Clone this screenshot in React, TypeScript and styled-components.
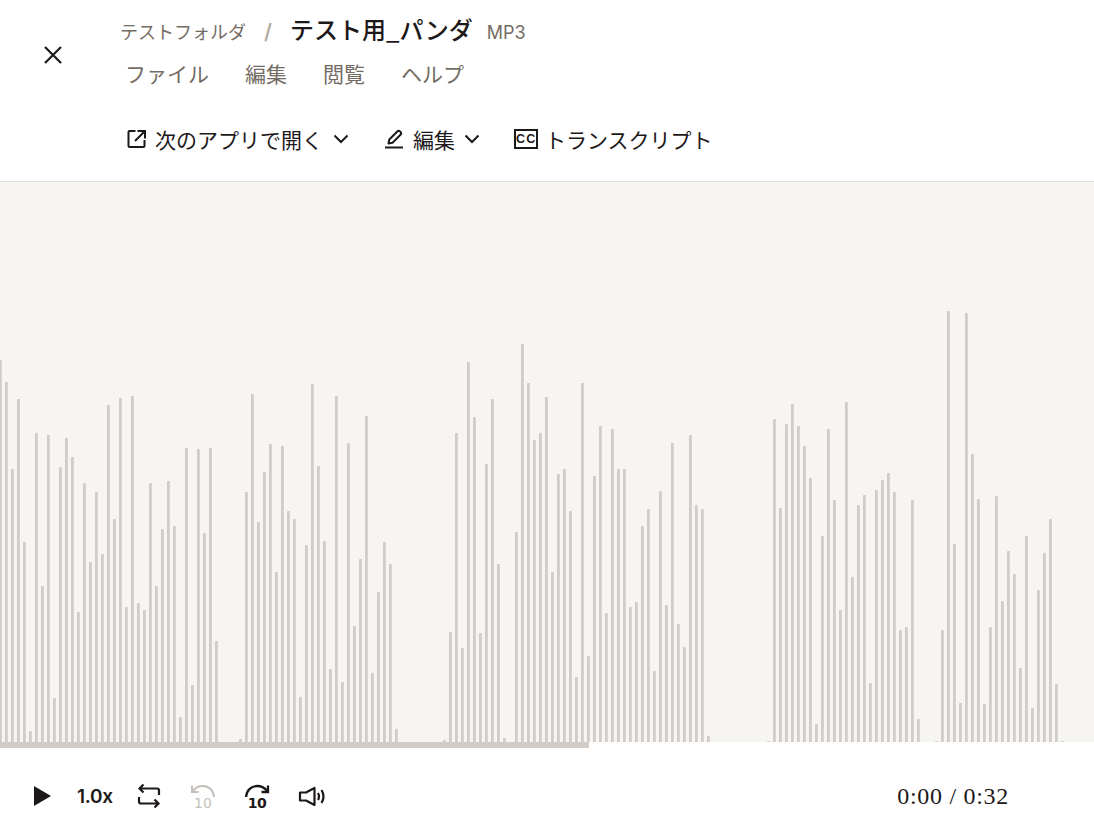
import React from "react";
import styled, { createGlobalStyle } from "styled-components";

const Global = createGlobalStyle`
  html, body { margin: 0; padding: 0; background: #fff; }
  body { font-family: "Inter", "Noto Sans CJK JP", sans-serif; }
`;

const JP = `"Noto Sans CJK JP", "Noto Sans", sans-serif`;

const Page = styled.div`
  width: 1094px;
  height: 834px;
  display: flex;
  flex-direction: column;
  overflow: hidden;
  color: #1e1919;
`;

const Header = styled.header`
  height: 181px;
  flex: none;
  display: flex;
  border-bottom: 1px solid #dfdcd8;
`;

const CloseButton = styled.button`
  width: 120px;
  height: 110px;
  flex: none;
  padding: 0 14px 0 0;
  border: 0;
  background: none;
  color: #1e1919;
  display: flex;
  align-items: center;
  justify-content: center;
`;

const HeaderMain = styled.div`
  display: flex;
  flex-direction: column;
`;

const Crumbs = styled.div`
  height: 24px;
  margin-top: 17px;
  display: flex;
  align-items: baseline;
  line-height: 24px;
  font-family: ${JP};
`;

const Folder = styled.span`
  font-size: 18px;
  color: #736c64;
`;

const Slash = styled.span`
  margin: 0 18px;
  font-size: 21px;
  font-weight: 600;
  color: #b4ada6;
  font-family: "Inter", sans-serif;
`;

const Title = styled.span`
  font-size: 24px;
  font-weight: 500;
  color: #1e1919;
`;

const Ext = styled.span`
  margin-left: 14px;
  font-size: 18px;
  color: #736c64;
  font-family: "Inter", sans-serif;
`;

const Menu = styled.nav`
  margin: 17px 0 0 5px;
  display: flex;
  gap: 36px;
  font-family: ${JP};
  font-size: 21px;
  line-height: 30px;
  color: #736c64;
`;

const Toolbar = styled.div`
  margin: 36px 0 0 6px;
  height: 30px;
  display: flex;
  align-items: center;
  font-family: ${JP};
  font-size: 21px;
  color: #1e1919;
`;

const Tool = styled.div<{ $gap: number; $textGap: number }>`
  display: flex;
  align-items: center;
  gap: ${(p) => p.$textGap}px;
  margin-right: ${(p) => p.$gap}px;
`;

const ChevronSvg = styled.svg<{ $offset: number }>`
  display: block;
  margin-left: ${(p) => p.$offset}px;
`;

const Wave = styled.div`
  height: 560px;
  flex: none;
  background: #f6f5f1;
`;

const WaveSvg = styled.svg`
  display: block;
`;

const Track = styled.div`
  height: 6px;
  flex: none;
  background: #fff;
`;

const TrackFill = styled.div`
  height: 100%;
  background: #d1ccc7;
`;

const Controls = styled.div`
  flex: 1;
  display: flex;
  align-items: center;
  padding: 10px 85px 0 30px;
`;

const PlayIcon = styled.svg`
  margin-right: 23px;
  display: block;
`;

const Speed = styled.span`
  width: 36px;
  margin-right: 23px;
  font-family: "Inter", sans-serif;
  font-size: 19px;
  font-weight: 600;
  letter-spacing: -0.3px;
  white-space: nowrap;
  color: #1e1919;
`;

const Ctl = styled.svg<{ $dim?: boolean; $gap: number }>`
  display: block;
  margin-right: ${(p) => p.$gap}px;
  color: ${(p) => (p.$dim ? "#c4bfb9" : "#1e1919")};
`;

const Time = styled.span`
  margin-left: auto;
  font-family: "Liberation Serif", serif;
  font-size: 24px;
  letter-spacing: 0.7px;
  white-space: nowrap;
  color: #1e1919;
`;

const tops: [number, number][] = [
  [0,360],[1,382],[2,469],[3,399],[4,542],[5,731],[6,433],[7,586],[8,435],[9,698],
  [10,467],[11,438],[12,457],[13,612],[14,483],[15,562],[16,492],[17,554],[18,405],[19,519],
  [20,398],[21,607],[22,396],[23,603],[24,610],[25,483],[26,586],[27,529],[28,481],[29,526],
  [30,717],[31,448],[32,685],[33,449],[34,533],[35,448],[36,641],
  [40,739],[41,492],[42,394],[43,522],[44,472],[45,444],[46,572],[47,446],[48,511],[49,519],
  [50,697],[51,545],[52,384],[53,466],[54,541],[55,669],[56,396],[57,682],[58,443],[59,626],
  [60,559],[61,416],[62,673],[63,592],[64,542],[65,564],[66,729],
  [74,740],[75,632],[76,433],[77,648],[78,362],[79,417],[80,633],[81,464],[82,399],[83,564],[84,738],
  [86,532],[87,344],[88,383],[89,440],[90,433],[91,397],[92,572],[93,474],[94,469],[95,511],
  [96,677],[97,383],[98,656],[99,476],[100,426],[101,613],[102,429],[103,469],[104,469],[105,607],
  [106,602],[107,526],[108,509],[109,671],[110,491],[111,605],[112,443],[113,624],[114,647],[115,435],
  [116,505],[117,509],[118,736],
  [128,741],[129,419],[130,508],[131,424],[132,404],[133,426],[134,446],[135,478],[136,724],[137,536],
  [138,429],[139,500],[140,610],[141,402],[142,577],[143,505],[144,495],[145,683],[146,490],[147,480],
  [148,473],[149,492],[150,630],[151,627],[152,500],[153,719],
  [156,741],[157,630],[158,311],[159,544],[160,703],[161,313],[162,454],[163,499],[164,704],[165,627],
  [166,496],[167,601],[168,551],[169,574],[170,668],[171,536],[172,708],[173,590],[174,553],[175,519],
  [176,684],[177,741],
];

const ICON_TEXT = `"DejaVu Sans", sans-serif`;

const Chevron = ({ offset = 0 }: { offset?: number }) => (
  <ChevronSvg $offset={offset} width="18" height="18" viewBox="0 0 18 18" fill="none" stroke="currentColor" strokeWidth="2">
    <path d="M2.500 5.500L9 12l6.500-6.500" />
  </ChevronSvg>
);

export default function App() {
  return (
    <Page>
      <Global />
      <Header>
        <CloseButton aria-label="close">
          <svg width="24" height="24" viewBox="0 0 24 24" fill="none" stroke="currentColor" strokeWidth="2.2">
            <path d="M4 4l16 16M20 4L4 20" />
          </svg>
        </CloseButton>
        <HeaderMain>
          <Crumbs>
            <Folder>テストフォルダ</Folder>
            <Slash>/</Slash>
            <Title>テスト用_パンダ</Title>
            <Ext>MP3</Ext>
          </Crumbs>
          <Menu>
            <span>ファイル</span>
            <span>編集</span>
            <span>閲覧</span>
            <span>ヘルプ</span>
          </Menu>
          <Toolbar>
            <Tool $gap={33} $textGap={7}>
              <svg width="22" height="22" viewBox="0 0 22 22" fill="none" stroke="currentColor" strokeWidth="2">
                <path d="M9.500 3H3.500a1 1 0 0 0-1 1v14a1 1 0 0 0 1 1h14a1 1 0 0 0 1-1v-6" />
                <path d="M9 13l9-9M11.500 3h7.500v7.500" />
              </svg>
              <span>次のアプリで開く</span>
              <Chevron offset={2} />
            </Tool>
            <Tool $gap={32} $textGap={8}>
              <svg width="22" height="22" viewBox="0 0 22 22" fill="none" stroke="currentColor" strokeWidth="2">
                <path d="M5.500 15.500l.8-4 8-8a2 2 0 0 1 2.800 0l.4.4a2 2 0 0 1 0 2.800l-8 8z" strokeLinejoin="round" />
                <path d="M2 19.500h18" />
              </svg>
              <span>編集</span>
              <Chevron />
            </Tool>
            <Tool $gap={0} $textGap={6}>
              <svg width="26" height="22" viewBox="0 0 26 22" fill="none">
                <rect x="2" y="2" width="22" height="18" stroke="currentColor" strokeWidth="2" />
                <text x="13.300" y="15.300" textAnchor="middle" fontFamily={`"Liberation Sans", sans-serif`} fontSize="12.500" fontWeight="700" letterSpacing="1.200" fill="currentColor">CC</text>
              </svg>
              <span>トランスクリプト</span>
            </Tool>
          </Toolbar>
        </HeaderMain>
      </Header>
      <Wave>
        <WaveSvg width="1094" height="560" viewBox="0 182 1094 560">
          {tops.map(([i, y]) => (
            <rect key={i} x={6 * i - 1} y={y} width="2.800" height={742 - y} fill="#d0cdc8" rx="0.500" />
          ))}
        </WaveSvg>
      </Wave>
      <Track>
        <TrackFill style={{ width: `${(589 / 1094) * 100}%` }} />
      </Track>
      <Controls>
        <PlayIcon width="24" height="24" viewBox="0 0 24 24">
          <path d="M4 2l17 10L4 22z" fill="#1e1919" />
        </PlayIcon>
        <Speed>1.0x</Speed>
        <Ctl $gap={28} width="26" height="26" viewBox="0 0 26 26" fill="none" stroke="currentColor" strokeWidth="2.200">
          <path d="M7.500 1.500L3.500 5.500l4 4M3.500 5.500H21a2 2 0 0 1 2 2v4.500" />
          <path d="M18.500 16.500l4 4-4 4M22.500 20.500H5a2 2 0 0 1-2-2V14" />
        </Ctl>
        <Ctl $dim $gap={28} width="26" height="34" viewBox="0 -4 26 34" fill="none" stroke="currentColor" strokeWidth="2">
          <path d="M2 2.500V9h6.500" />
          <path d="M2.500 8.500C5 5 9 3 13 3c6 0 10.500 4.500 11 11" />
          <text x="13" y="25" textAnchor="middle" fontFamily={ICON_TEXT} fontSize="14" fontWeight="400" fill="currentColor" stroke="none">10</text>
        </Ctl>
        <Ctl $gap={28} width="26" height="34" viewBox="0 -4 26 34" fill="none" stroke="currentColor" strokeWidth="2.300">
          <path d="M24 2.500V9h-6.500" />
          <path d="M23.500 8.500C21 5 17 3 13 3 7 3 2.500 7.500 2 14" />
          <text x="13" y="25" textAnchor="middle" fontFamily={ICON_TEXT} fontSize="14" fontWeight="700" letterSpacing="-0.5" fill="currentColor" stroke="none">10</text>
        </Ctl>
        <Ctl $gap={0} width="28" height="24" viewBox="0 0 28 24" fill="none" stroke="currentColor" strokeWidth="2.200">
          <path d="M2 8.500h6L16.500 4v17L8 16.500H2z" strokeLinejoin="round" />
          <path d="M20 9c1.200 2.200 1.200 4.800 0 7M23.500 6c2.500 4 2.500 9 0 13" />
        </Ctl>
        <Time>0:00 / 0:32</Time>
      </Controls>
    </Page>
  );
}
